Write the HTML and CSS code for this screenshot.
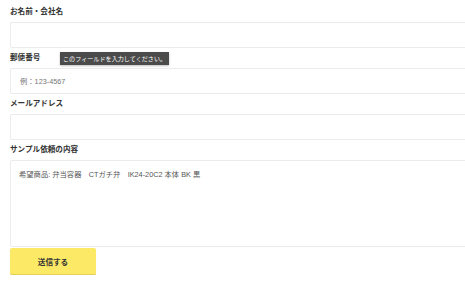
FILE: index.html
```html
<!DOCTYPE html>
<html lang="ja">
<head>
  <meta charset="UTF-8">
  <title>サンプル依頼</title>
  <link rel="stylesheet" href="styles.css">
</head>
<body>
  <form class="sample-form">
    <label class="field-label">お名前・会社名</label>
    <input class="field-input" type="text">

    <div class="label-row">
      <label class="field-label">郵便番号</label>
      <div class="tooltip">このフィールドを入力してください。</div>
    </div>
    <input class="field-input" type="text" placeholder="例：123-4567">

    <label class="field-label">メールアドレス</label>
    <input class="field-input" type="email">

    <label class="field-label">サンプル依頼の内容</label>
    <textarea class="field-input field-textarea" spellcheck="false">希望商品: 弁当容器　CTガチ弁　IK24-20C2 本体 BK 黒</textarea>

    <button type="button" class="submit-btn">送信する</button>
  </form>
</body>
</html>
```

FILE: styles.css
```css
body {
  margin: 0;
  padding: 5px 0 0 10px;
  background-color: #fff;
  font-family: "Liberation Sans", "Noto Sans CJK JP", sans-serif;
  overflow: hidden;
}
.sample-form {
  display: flex;
  flex-direction: column;
  align-items: flex-start;
  width: 480px;
}
.label-row {
  position: relative;
  width: 100%;
}
.field-label {
  display: block;
  font-size: 7.6px;
  line-height: 14px;
  font-weight: bold;
  color: #333;
  margin-bottom: 3px;
}
.tooltip {
  position: absolute;
  left: 50px;
  top: 1px;
  background-color: #4b4b4b;
  color: #fff;
  font-size: 6.1px;
  line-height: 13px;
  padding: 0 3px;
  white-space: nowrap;
  box-shadow: 0 1px 2px rgba(0, 0, 0, 0.25);
}
.field-input {
  box-sizing: border-box;
  width: 100%;
  height: 26px;
  margin: 0 0 3px;
  padding: 0 9px;
  border: 1px solid #ececec;
  border-radius: 2px;
  background-color: #fff;
  font-family: inherit;
  font-size: 7.3px;
  color: #555;
  outline: none;
}
.field-input::placeholder {
  color: #777;
}
.field-textarea {
  height: 87px;
  margin-bottom: 1px;
  padding: 8px 8px;
  line-height: 12px;
  resize: none;
}
.submit-btn {
  width: 86px;
  height: 27px;
  border: none;
  border-bottom: 1px solid #e3cf55;
  border-radius: 2px;
  background-color: #fce965;
  font-family: inherit;
  font-size: 7.6px;
  font-weight: bold;
  color: #333;
  box-shadow: 0 1px 1px rgba(0, 0, 0, 0.1);
}
```
